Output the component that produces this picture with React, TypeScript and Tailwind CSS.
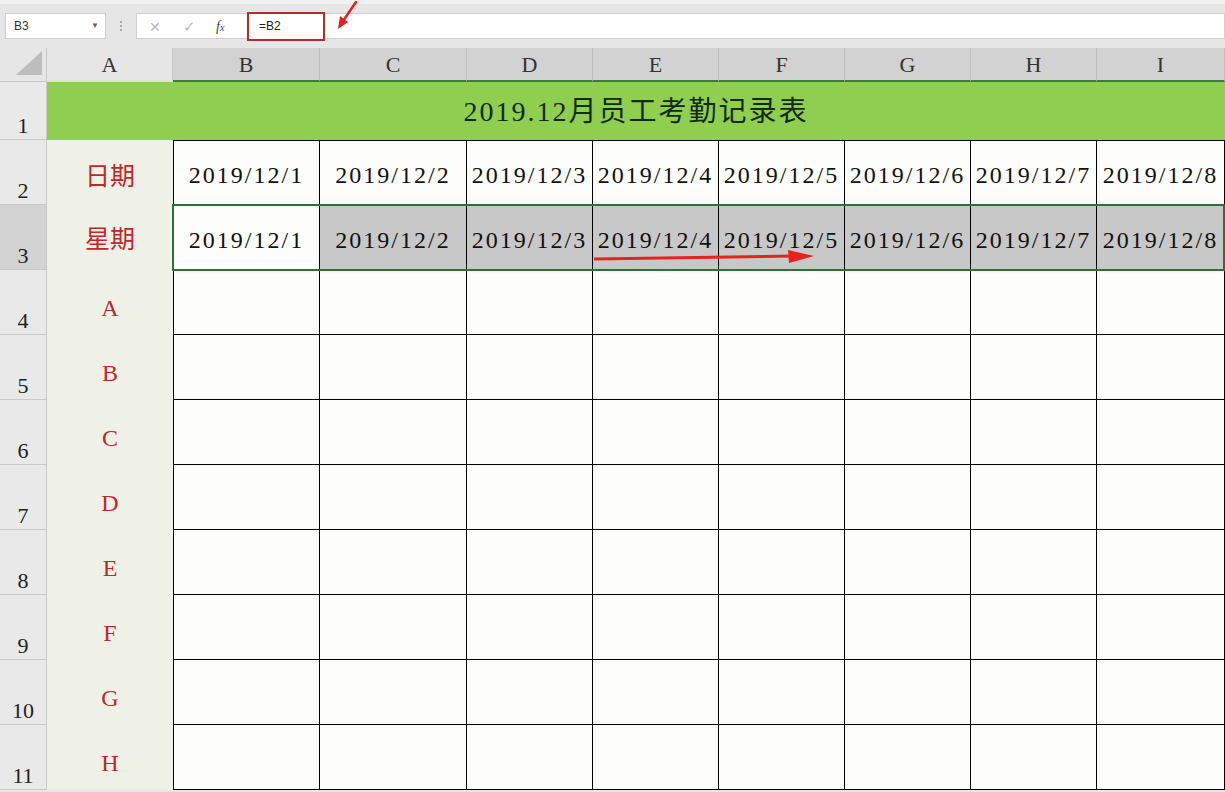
import React from 'react';

const cols = ['A', 'B', 'C', 'D', 'E', 'F', 'G', 'H', 'I'];
const dates = [1, 2, 3, 4, 5, 6, 7, 8].map((d) => `2019/12/${d}`);
const people = ['A', 'B', 'C', 'D', 'E', 'F', 'G', 'H'];

const cjk = { fontFamily: '"Liberation Serif", "Noto Sans CJK SC", serif' };

const RowHead = ({ n, active }: { n: number; active?: boolean }) => (
  <div
    className={`flex items-end justify-center border-b border-r border-[#c9c9c9] pb-0 text-[22px] leading-none text-[#222] ${
      active ? 'bg-[#d3d3d3]' : 'bg-[#e9e9e9]'
    }`}
    style={cjk}
  >
    <span className="mb-[2px]">{n}</span>
  </div>
);

const App = () => {
  return (
    <div className="h-[792px] w-[1225px] overflow-hidden bg-[#e6e6e6] select-none">
      {/* formula bar */}
      <div className="relative flex h-[48px] items-center border-t-[4px] border-[#f2f2f2] pl-[5px]">
        <div className="flex h-[26px] w-[101px] items-center justify-between border border-[#cfcfcf] bg-white pl-[8px] pr-[6px] text-[12px] text-[#333]" style={{ fontFamily: '"Liberation Sans", sans-serif' }}>
          <span>B3</span>
          <span className="text-[8px] text-[#666]">▼</span>
        </div>
        <div className="ml-[14px] flex flex-col gap-[2px]">
          <span className="h-[2px] w-[2px] bg-[#aaa]" />
          <span className="h-[2px] w-[2px] bg-[#aaa]" />
          <span className="h-[2px] w-[2px] bg-[#aaa]" />
        </div>
        <div className="ml-[14px] flex h-[26px] flex-1 items-center border border-[#cfcfcf] bg-white">
          <div className="flex w-[110px] items-center text-[#b8b8b8]">
            <span className="ml-[12px] text-[14px]">✕</span>
            <span className="ml-[22px] text-[15px]">✓</span>
            <span className="ml-[20px] text-[14px] italic text-[#444]" style={{ fontFamily: '"Liberation Serif", serif' }}>
              f<span className="text-[10px]">x</span>
            </span>
          </div>
          <div className="flex h-[29px] w-[78px] items-center border-2 border-[#b42b2b] bg-white pl-[10px] text-[12px] text-[#222]" style={{ fontFamily: '"Liberation Sans", sans-serif' }}>
            =B2
          </div>
        </div>
        <svg className="absolute left-[334px] top-[-4px]" width="26" height="32" viewBox="0 0 26 32">
          <path d="M22 2 L9 21" stroke="#e02020" strokeWidth="2.5" strokeLinecap="round" />
          <path d="M4 29 L6 16 L14 22 Z" fill="#e02020" />
        </svg>
      </div>

      {/* sheet */}
      <div
        className="relative grid"
        style={{
          gridTemplateColumns: '47px 126px 147px 147px 126px 126px 126px 126px 126px 128px',
          gridTemplateRows: '34px 58px 65px 65px repeat(8, 65px)',
        }}
      >
        {/* corner */}
        <div className="relative border-b border-r border-[#c9c9c9] bg-[#e6e6e6]">
          <svg className="absolute bottom-[6px] right-[4px]" width="26" height="24" viewBox="0 0 26 24">
            <path d="M26 0 L26 24 L0 24 Z" fill="#bdbdbd" />
          </svg>
        </div>
        {cols.map((c) => (
          <div
            key={c}
            className={`flex items-center justify-center border-r text-[22px] text-[#333] ${
              c === 'A'
                ? 'border-b-2 border-r-[#c9c9c9] border-b-[#d8e8c8] bg-[#e6e6e6]'
                : 'border-b-2 border-r-[#bdbdbd] border-b-[#3c7d3a] bg-[#d2d2d2]'
            }`}
            style={cjk}
          >
            {c}
          </div>
        ))}

        {/* row 1 */}
        <RowHead n={1} />
        <div
          className="col-span-9 flex items-center justify-center bg-[#8fce4f] pt-[2px] text-[28px] tracking-[2px] text-[#122a12]"
          style={cjk}
        >
          2019.12月员工考勤记录表
        </div>

        {/* row 2 */}
        <RowHead n={2} />
        <div className="flex items-start justify-center bg-[#eff1e6] pt-[18px] text-[25px] text-[#c0272d]" style={cjk}>
          日期
        </div>
        {dates.map((d, i) => (
          <div
            key={d}
            className={`flex items-center justify-center border-b border-r border-t border-black bg-[#fdfefb] pt-[4px] text-[24px] tracking-[2px] text-[#111] ${
              i === 0 ? 'border-l' : ''
            }`}
            style={cjk}
          >
            {d}
          </div>
        ))}

        {/* row 3 */}
        <RowHead n={3} active />
        <div className="flex items-start justify-center bg-[#eff1e6] pt-[16px] text-[25px] text-[#c0272d]" style={cjk}>
          星期
        </div>
        {dates.map((d, i) => (
          <div
            key={d}
            className={`flex items-center justify-center border-r border-black pt-[4px] text-[24px] tracking-[2px] text-[#111] ${
              i === 0 ? 'border-l bg-[#fdfefb]' : 'bg-[#c8c8c8]'
            }`}
            style={cjk}
          >
            {d}
          </div>
        ))}

        {/* rows 4-11 */}
        {people.map((p, r) => (
          <React.Fragment key={p}>
            <RowHead n={r + 4} />
            <div className="flex items-start justify-center bg-[#eff1e6] pt-[20px] text-[24px] text-[#c0272d]" style={cjk}>
              {p}
            </div>
            {dates.map((d, i) => (
              <div
                key={d}
                className={`border-b border-r border-black bg-[#fdfefb] ${i === 0 ? 'border-l' : ''} ${
                  r === 0 ? 'border-t' : ''
                }`}
              />
            ))}
          </React.Fragment>
        ))}

        {/* selection B3:I3 */}
        <div className="pointer-events-none absolute left-[172px] top-[156px] h-[67px] w-[1053px] border-2 border-[#2f6e3b]" />

        {/* red arrow */}
        <svg className="pointer-events-none absolute left-[592px] top-[200px]" width="225" height="16" viewBox="0 0 225 16">
          <path d="M2 11 L202 8" stroke="#e5231f" strokeWidth="3" />
          <path d="M196 2 L222 8 L197 15 Z" fill="#e5231f" />
        </svg>
      </div>
    </div>
  );
};

export default App;
